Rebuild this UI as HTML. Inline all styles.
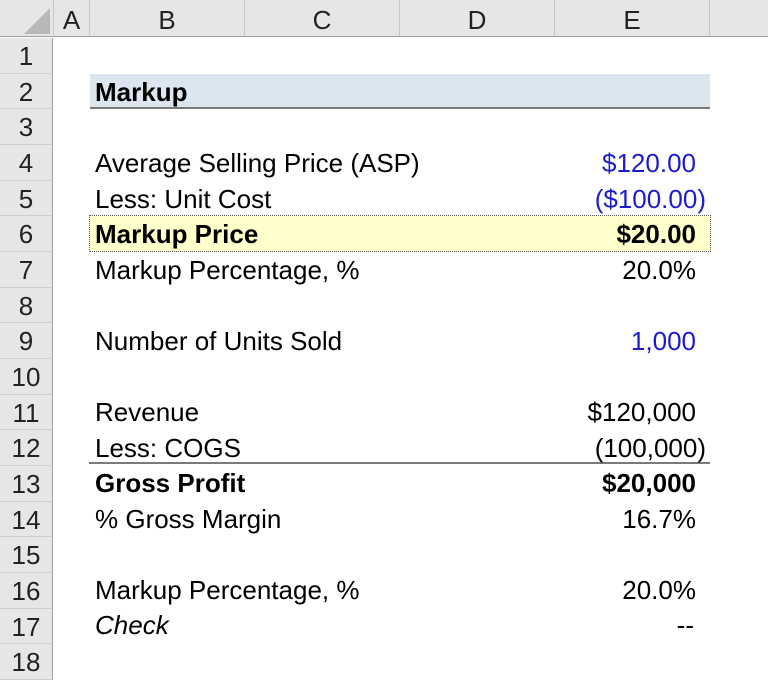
<!DOCTYPE html>
<html><head><style>
body{margin:0;width:768px;height:680px;overflow:hidden;background:#fff;font-family:"Liberation Sans",Arial,sans-serif;position:relative}
.ch{position:absolute;top:0;height:37px;background:#e6e6e6;border-bottom:1px solid #9e9e9e;font-size:26px;text-align:center;line-height:40px;color:#222;box-sizing:border-box;border-right:1px solid #c8c8c8}
.rh{position:absolute;left:0;width:53px;background:#e6e6e6;border-right:1px solid #9e9e9e;border-bottom:1px solid #cfcfcf;box-sizing:border-box;font-size:26px;text-align:center;color:#222}
.t{position:absolute;font-size:26px;white-space:nowrap;color:#000;line-height:30px}
.r{text-align:right}
.b{font-weight:bold}
.blue{color:#1c1ccc}
</style></head><body>
<div class="ch" style="left:0;width:54px"><svg width="54" height="37" style="position:absolute;left:0;top:0"><polygon points="50,8 50,34 24,34" fill="#b8b8b8"/></svg></div>
<div class="ch" style="left:54px;width:36px">A</div>
<div class="ch" style="left:90px;width:155px">B</div>
<div class="ch" style="left:245px;width:155px">C</div>
<div class="ch" style="left:400px;width:155px">D</div>
<div class="ch" style="left:555px;width:155px">E</div>
<div class="ch" style="left:710px;width:58px;border-right:none"></div>
<div id="rows"></div>
<div style="position:absolute;left:90px;top:74px;width:620px;height:33px;background:#dce6f1;border-bottom:2px solid #7a7a7a"></div>
<div style="position:absolute;left:89px;top:215px;width:620px;height:35px;background:#ffffcc;border:1px dotted #555"></div>
<div style="position:absolute;left:89px;top:462px;width:621px;height:2px;background:#7a7a7a"></div>
<script>
var h=35.67,s='';
for(var i=1;i<=18;i++){var t=38+(i-1)*h;s+='<div class="rh" style="top:'+t+'px;height:'+h+'px;line-height:'+(h+1)+'px">'+i+'</div>';}
document.getElementById('rows').innerHTML=s;
</script>
<div class="t b" style="left:95px;top:77px">Markup</div>
<div class="t" style="left:95px;top:148px">Average Selling Price (ASP)</div>
<div class="t blue r" style="right:72px;top:148px">$120.00</div>
<div class="t" style="left:95px;top:184px">Less: Unit Cost</div>
<div class="t blue r" style="right:62px;top:184px">($100.00)</div>
<div class="t b" style="left:95px;top:219px">Markup Price</div>
<div class="t b r" style="right:72px;top:219px">$20.00</div>
<div class="t" style="left:95px;top:255px">Markup Percentage, %</div>
<div class="t r" style="right:72px;top:255px">20.0%</div>
<div class="t" style="left:95px;top:326px">Number of Units Sold</div>
<div class="t blue r" style="right:72px;top:326px">1,000</div>
<div class="t" style="left:95px;top:397px">Revenue</div>
<div class="t r" style="right:72px;top:397px">$120,000</div>
<div class="t" style="left:95px;top:433px">Less: COGS</div>
<div class="t r" style="right:62px;top:433px">(100,000)</div>
<div class="t b" style="left:95px;top:468px">Gross Profit</div>
<div class="t b r" style="right:72px;top:468px">$20,000</div>
<div class="t" style="left:95px;top:504px">% Gross Margin</div>
<div class="t r" style="right:72px;top:504px">16.7%</div>
<div class="t" style="left:95px;top:575px">Markup Percentage, %</div>
<div class="t r" style="right:72px;top:575px">20.0%</div>
<div class="t" style="left:95px;top:610px;font-style:italic">Check</div>
<div class="t r" style="right:74px;top:610px">--</div>
</body></html>
